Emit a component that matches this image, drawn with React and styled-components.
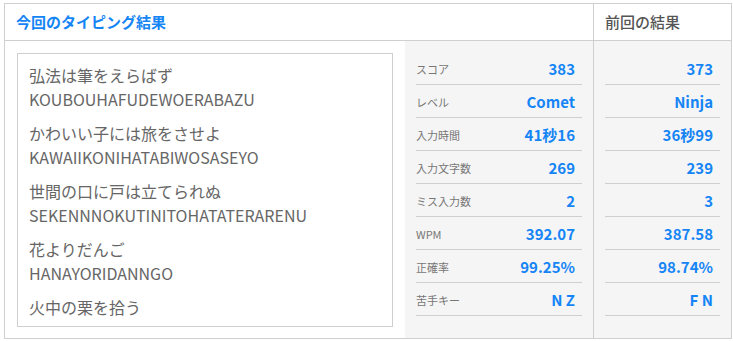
import React from "react";
import styled, { createGlobalStyle } from "styled-components";

const Global = createGlobalStyle`
  html, body { margin: 0; padding: 0; background: #fff; }
  body { font-family: "Noto Sans CJK JP", "Noto Sans", sans-serif; }
`;

const Frame = styled.div`
  box-sizing: border-box;
  width: 728px;
  margin: 3px 0 0 4px;
  border: 1px solid #cfcfcf;
  display: grid;
  grid-template-columns: 400px 188px 1fr;
  grid-template-rows: 37px 297px;
`;

const HeadCell = styled.div`
  grid-column: ${(p) => p.$span};
  display: flex;
  align-items: center;
  padding: 0 11px;
  border-bottom: 1px solid #cfcfcf;
  border-left: ${(p) => (p.$divided ? "1px solid #cfcfcf" : "none")};
  font-size: 15px;
  font-weight: ${(p) => (p.$accent ? 700 : 500)};
  color: ${(p) => (p.$accent ? "#1585f5" : "#555")};
  padding-bottom: 1px;
`;

const TextCell = styled.div`
  padding: 12px 12px 11px 12px;
  display: flex;
`;

const PhraseBox = styled.div`
  flex: 1;
  border: 1px solid #cfcfcf;
  padding: 9px 11px;
  overflow: hidden;
  color: #666;
  font-size: 16px;
  line-height: 24px;
`;

const Phrase = styled.div`
  margin-bottom: 10px;
`;

const StatCol = styled.div`
  background: #f5f5f5;
  padding: 11px 11px 0 11px;
  border-left: ${(p) => (p.$divided ? "1px solid #cfcfcf" : "none")};
`;

const StatRow = styled.div`
  height: 33px;
  box-sizing: border-box;
  border-bottom: 1px solid #cfcfcf;
  display: flex;
  align-items: center;
  justify-content: space-between;
  padding: 1px 7px 0 0;
`;

const Label = styled.span`
  font-size: 11px;
  color: #777;
`;

const Value = styled.span`
  font-size: 15px;
  font-weight: 700;
  color: #1585f5;
  margin-left: auto;
`;

const phrases = [
  ["弘法は筆をえらばず", "KOUBOUHAFUDEWOERABAZU"],
  ["かわいい子には旅をさせよ", "KAWAIIKONIHATABIWOSASEYO"],
  ["世間の口に戸は立てられぬ", "SEKENNNOKUTINITOHATATERARENU"],
  ["花よりだんご", "HANAYORIDANNGO"],
  ["火中の栗を拾う", "KATYUUNOKURIWOHIROU"],
];

const labels = ["スコア", "レベル", "入力時間", "入力文字数", "ミス入力数", "WPM", "正確率", "苦手キー"];
const current = ["383", "Comet", "41秒16", "269", "2", "392.07", "99.25%", "N Z"];
const previous = ["373", "Ninja", "36秒99", "239", "3", "387.58", "98.74%", "F N"];

export default function App() {
  return (
    <>
      <Global />
      <Frame>
        <HeadCell $span="1 / 3" $accent>今回のタイピング結果</HeadCell>
        <HeadCell $span="3 / 4" $divided>前回の結果</HeadCell>
        <TextCell>
          <PhraseBox>
            {phrases.map(([jp, ro]) => (
              <Phrase key={ro}>
                <div>{jp}</div>
                <div>{ro}</div>
              </Phrase>
            ))}
          </PhraseBox>
        </TextCell>
        <StatCol>
          {labels.map((l, i) => (
            <StatRow key={l}>
              <Label>{l}</Label>
              <Value>{current[i]}</Value>
            </StatRow>
          ))}
        </StatCol>
        <StatCol $divided>
          {previous.map((v, i) => (
            <StatRow key={i}>
              <Value>{v}</Value>
            </StatRow>
          ))}
        </StatCol>
      </Frame>
    </>
  );
}
